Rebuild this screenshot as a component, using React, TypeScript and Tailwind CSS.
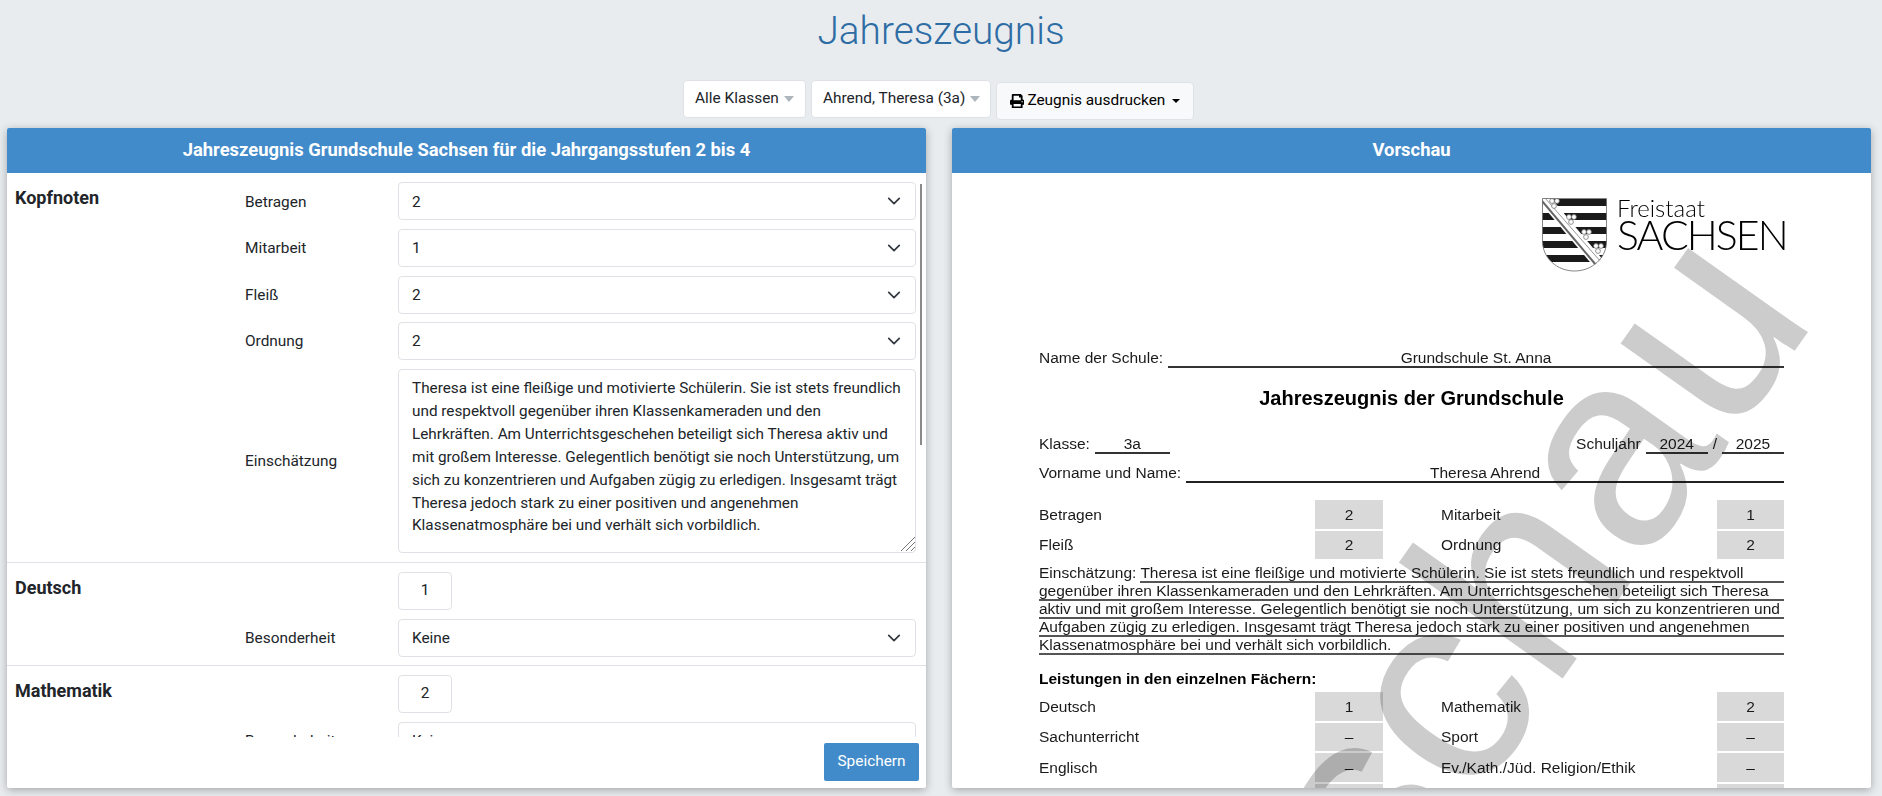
import React from "react";
import { FaPrint } from "react-icons/fa";

const essay =
  "Theresa ist eine fleißige und motivierte Schülerin. Sie ist stets freundlich und respektvoll gegenüber ihren Klassenkameraden und den Lehrkräften. Am Unterrichtsgeschehen beteiligt sich Theresa aktiv und mit großem Interesse. Gelegentlich benötigt sie noch Unterstützung, um sich zu konzentrieren und Aufgaben zügig zu erledigen. Insgesamt trägt Theresa jedoch stark zu einer positiven und angenehmen Klassenatmosphäre bei und verhält sich vorbildlich.";

function Chevron() {
  return (
    <svg viewBox="0 0 16 16" className="pointer-events-none absolute right-[15px] top-[12px] h-[14px] w-[14px]">
      <path d="M2 5l6 6 6-6" fill="none" stroke="#343a40" strokeWidth="2" strokeLinecap="round" strokeLinejoin="round" />
    </svg>
  );
}

function Select({ value, first }: { value: string; first?: boolean }) {
  return (
    <div className="relative h-[38px] w-[518px]">
      <select
        defaultValue={value}
        className={`h-full w-full appearance-none rounded-[4px] border border-[#dee2e6] bg-white pl-[13px] text-[15.4px] text-[#212529] outline-none ${first ? "pt-[4px]" : "pt-[2px]"}`}
      >
        <option>{value}</option>
      </select>
      <Chevron />
    </div>
  );
}

function Field({ label, children, nudge = "pt-[2px]", className = "" }: { label?: string; children: React.ReactNode; nudge?: string; className?: string }) {
  return (
    <div className={`flex items-center ${className}`}>
      <div className={`w-[153px] text-[15.4px] text-[#212529] ${nudge}`}>{label}</div>
      {children}
    </div>
  );
}

function Section({ title, children, last, pb = "pb-[8px]" }: { title: string; children: React.ReactNode; last?: boolean; pb?: string }) {
  return (
    <section className={`flex pl-[8px] pt-[9px] ${pb} ${last ? "" : "border-b border-[#dee2e6]"}`}>
      <h3 className="w-[230px] pt-[1px] text-[18px] font-bold leading-[30px] text-[#212529]">{title}</h3>
      <div className="flex flex-col gap-[9px]">{children}</div>
    </section>
  );
}

function NumberBox({ value }: { value: string }) {
  return (
    <div className="flex h-[38px] w-[54px] items-center justify-center rounded-[4px] border border-[#dee2e6] bg-white text-[15.4px] text-[#212529]">
      {value}
    </div>
  );
}

function Tri({ color }: { color: string }) {
  return (
    <svg viewBox="0 0 10 6" className="h-[6px] w-[10px] shrink-0">
      <path d="M0 0h10L5 6z" fill={color} />
    </svg>
  );
}

function Shield() {
  const clovers = [
    [10, 6],
    [27, 22],
    [42, 37],
    [54, 51],
  ];
  return (
    <svg viewBox="0 0 65 74" className="h-[74px] w-[65px] shrink-0">
      <defs>
        <clipPath id="shield">
          <path d="M.5.5h64v43C64.500 60 50 73 32.500 73S.5 60 .5 43z" />
        </clipPath>
      </defs>
      <g clipPath="url(#shield)">
        <rect width="65" height="74" fill="#fff" />
        {[1, 15, 29, 43, 57].map((y) => (
          <rect key={y} x="0" y={y} width="65" height="7" fill="#1a1a1a" />
        ))}
        <path d="M0 0h9l53 63-9 7L0 7z" fill="#fff" />
        <path d="M0 3l54 64" stroke="#666" strokeWidth="2" />
        <path d="M3 0l56 64" stroke="#999" strokeWidth="1" />
        {clovers.map(([x, y]) => (
          <g key={x} fill="#fff" stroke="#777" strokeWidth=".8">
            <circle cx={x} cy={y - 3} r="2.4" />
            <circle cx={x + 5} cy={y - 3} r="2.4" />
            <circle cx={x + 2} cy={y + 2} r="2.4" />
          </g>
        ))}
      </g>
      <path d="M.5.5h64v43C64.500 60 50 73 32.500 73S.5 60 .5 43z" fill="none" stroke="#666" strokeWidth=".8" />
    </svg>
  );
}

function GradeRow({ a, b, c, d }: { a: string; b: string; c: string; d: string }) {
  return (
    <div className="mb-[2px] grid h-[28.5px] grid-cols-[276px_68px_58px_276px_67px] items-center">
      <div>{a}</div>
      <div className="flex h-[28.5px] items-center justify-center bg-[#d9d9d9]">{b}</div>
      <div />
      <div>{c}</div>
      <div className="flex h-[28.5px] items-center justify-center bg-[#d9d9d9]">{d}</div>
    </div>
  );
}

function EssayLine({ children, first }: { children: React.ReactNode; first?: boolean }) {
  return (
    <div className="flex h-[18px]">
      {first && <span className="mr-[4px] leading-[16px]">Einschätzung:</span>}
      <span className="h-[18px] flex-1 whitespace-nowrap border-b-2 border-[#555] leading-[16px]">{children}</span>
    </div>
  );
}

export default function App() {
  return (
    <div className="flex h-[796px] w-[1882px] flex-col overflow-hidden bg-[#e9ecef] font-['Roboto',sans-serif]">
      <h1 className="h-[80px] pt-[6px] text-center text-[38.8px] font-light leading-[50px] text-[#2e6da4]">Jahreszeugnis</h1>

      <div className="flex h-[48px] items-start justify-center gap-[5px] pr-[5px] text-[15.4px] text-[#212529]">
        <div className="flex h-[38px] w-[123px] items-center gap-[5px] rounded-[4px] border border-[#dee2e6] bg-white pl-[11px]">
          <span className="whitespace-nowrap">Alle Klassen</span>
          <Tri color="#adb5bd" />
        </div>
        <div className="flex h-[38px] w-[180px] items-center gap-[5px] rounded-[4px] border border-[#dee2e6] bg-white pl-[11px]">
          <span className="whitespace-nowrap">Ahrend, Theresa (3a)</span>
          <Tri color="#adb5bd" />
        </div>
        <div className="mt-[2px] flex h-[38px] w-[198px] items-center gap-[3px] rounded-[4px] border border-[#dee2e6] bg-[#f8f9fa] pl-[13px] text-black">
          <FaPrint className="h-[14.4px] w-[14.4px] shrink-0" />
          <span className="whitespace-nowrap">Zeugnis ausdrucken</span>
          <span className="ml-[4px] h-0 w-0 border-x-[4px] border-t-[4px] border-x-transparent border-t-black" />
        </div>
      </div>

      <div className="flex h-[660px] pl-[7px]">
        <div className="mr-[26px] flex w-[919px] flex-col overflow-hidden rounded-[2px] bg-white shadow-[0_2px_8px_rgba(0,0,0,0.3)]">
          <div className="flex h-[45px] shrink-0 items-center justify-center bg-[#428bca] pb-[2px] text-[18.4px] font-bold text-white">
            Jahreszeugnis Grundschule Sachsen für die Jahrgangsstufen 2 bis 4
          </div>
          <div className="relative h-[564px] shrink-0 overflow-hidden">
            <Section title="Kopfnoten" pb="pb-[9px]">
              <Field label="Betragen" nudge="pt-[4px]"><Select value="2" first /></Field>
              <Field label="Mitarbeit"><Select value="1" /></Field>
              <Field label="Fleiß"><Select value="2" /></Field>
              <Field label="Ordnung" className="-mt-[1px]"><Select value="2" /></Field>
              <Field label="Einschätzung">
                <div className="relative h-[184px] w-[518px]">
                  <textarea
                    defaultValue={essay}
                    className="block h-full w-full resize-none overflow-hidden rounded-[4px] border border-[#dee2e6] bg-white py-[7px] pl-[13px] pr-[10px] text-[15.3px] leading-[22.9px] text-[#212529] outline-none"
                  />
                  <svg viewBox="0 0 15 14" className="pointer-events-none absolute bottom-[2px] right-[1px] h-[14px] w-[15px]">
                    <path d="M15 0L1 14M15 5l-9 9M15 10l-4 4" stroke="#777" strokeWidth="1" fill="none" />
                  </svg>
                </div>
              </Field>
            </Section>
            <Section title="Deutsch">
              <Field><NumberBox value="1" /></Field>
              <Field label="Besonderheit"><Select value="Keine" /></Field>
            </Section>
            <Section title="Mathematik" last>
              <Field><NumberBox value="2" /></Field>
              <Field label="Besonderheit"><Select value="Keine" /></Field>
            </Section>
            <div className="absolute left-[913px] top-[11px] h-[261px] w-[2px] bg-[#8a8a8a]" />
          </div>
          <div className="flex flex-1 justify-end pr-[7px] pt-[6px]">
            <button className="h-[38px] w-[95px] rounded-[2px] bg-[#428bca] text-[15.4px] text-white">Speichern</button>
          </div>
        </div>

        <div className="flex w-[919px] flex-col overflow-hidden rounded-[2px] bg-white shadow-[0_2px_8px_rgba(0,0,0,0.3)]">
          <div className="flex h-[45px] shrink-0 items-center justify-center bg-[#428bca] pb-[2px] text-[18.4px] font-bold text-white">
            Vorschau
          </div>
          <div className="relative flex-1 overflow-hidden blur-[0.4px]">
            <div className="px-[87px] pt-[25px] font-['Liberation_Sans',Arial,sans-serif] text-[15.5px] text-[#1a1a1a]">
              <div className="flex h-[74px] justify-end">
                <Shield />
                <div className="ml-[10px] w-[167px] font-['Lato',sans-serif] font-light leading-none text-black">
                  <div className="mt-[-3px] text-[24px] leading-[26px]">Freistaat</div>
                  <div className="mt-[-5px] whitespace-nowrap text-[41px] leading-[38px] tracking-[-1.9px]">SACHSEN</div>
                </div>
              </div>

              <div className="mt-[73px] flex h-[23px] items-end">
                <span className="mr-[5px] leading-[21px]">Name der Schule:</span>
                <span className="flex-1 border-b-2 border-[#333] text-center leading-[17px]">Grundschule St. Anna</span>
              </div>
              <h2 className="mt-[18px] text-center text-[20px] font-bold leading-[24px] text-black">Jahreszeugnis der Grundschule</h2>

              <div className="mt-[21px] flex h-[23px] items-end">
                <span className="mr-[5px] leading-[21px]">Klasse:</span>
                <span className="w-[75px] border-b-2 border-[#333] text-center leading-[17px]">3a</span>
                <span className="ml-auto mr-[5px] leading-[21px]">Schuljahr</span>
                <span className="w-[62px] border-b-2 border-[#333] text-center leading-[17px]">2024</span>
                <span className="mx-[5px] leading-[21px]">/</span>
                <span className="w-[62px] border-b-2 border-[#333] text-center leading-[17px]">2025</span>
              </div>
              <div className="mt-[6px] flex h-[23px] items-end">
                <span className="mr-[5px] leading-[21px]">Vorname und Name:</span>
                <span className="flex-1 border-b-2 border-[#222] text-center leading-[17px]">Theresa Ahrend</span>
              </div>

              <div className="mt-[17px]">
                <GradeRow a="Betragen" b="2" c="Mitarbeit" d="1" />
                <GradeRow a="Fleiß" b="2" c="Ordnung" d="2" />
              </div>

              <div className="mt-[6px]">
                <EssayLine first>Theresa ist eine fleißige und motivierte Schülerin. Sie ist stets freundlich und respektvoll</EssayLine>
                <EssayLine>gegenüber ihren Klassenkameraden und den Lehrkräften. Am Unterrichtsgeschehen beteiligt sich Theresa</EssayLine>
                <EssayLine>aktiv und mit großem Interesse. Gelegentlich benötigt sie noch Unterstützung, um sich zu konzentrieren und</EssayLine>
                <EssayLine>Aufgaben zügig zu erledigen. Insgesamt trägt Theresa jedoch stark zu einer positiven und angenehmen</EssayLine>
                <EssayLine>Klassenatmosphäre bei und verhält sich vorbildlich.</EssayLine>
              </div>

              <div className="mt-[14px] h-[20px] font-bold leading-[20px] text-black">Leistungen in den einzelnen Fächern:</div>
              <div className="mt-[3px]">
                <GradeRow a="Deutsch" b="1" c="Mathematik" d="2" />
                <GradeRow a="Sachunterricht" b="–" c="Sport" d="–" />
                <GradeRow a="Englisch" b="–" c="Ev./Kath./Jüd. Religion/Ethik" d="–" />
                <GradeRow a="" b="" c="" d="" />
              </div>
            </div>
            <div className="pointer-events-none absolute left-[455px] top-[560px] -translate-x-1/2 -translate-y-1/2 rotate-[-54.7deg] whitespace-nowrap font-['Liberation_Sans',Arial,sans-serif] text-[277px] leading-none text-[#cccccc] mix-blend-multiply">
              Vorschau
            </div>
          </div>
        </div>
      </div>
    </div>
  );
}
